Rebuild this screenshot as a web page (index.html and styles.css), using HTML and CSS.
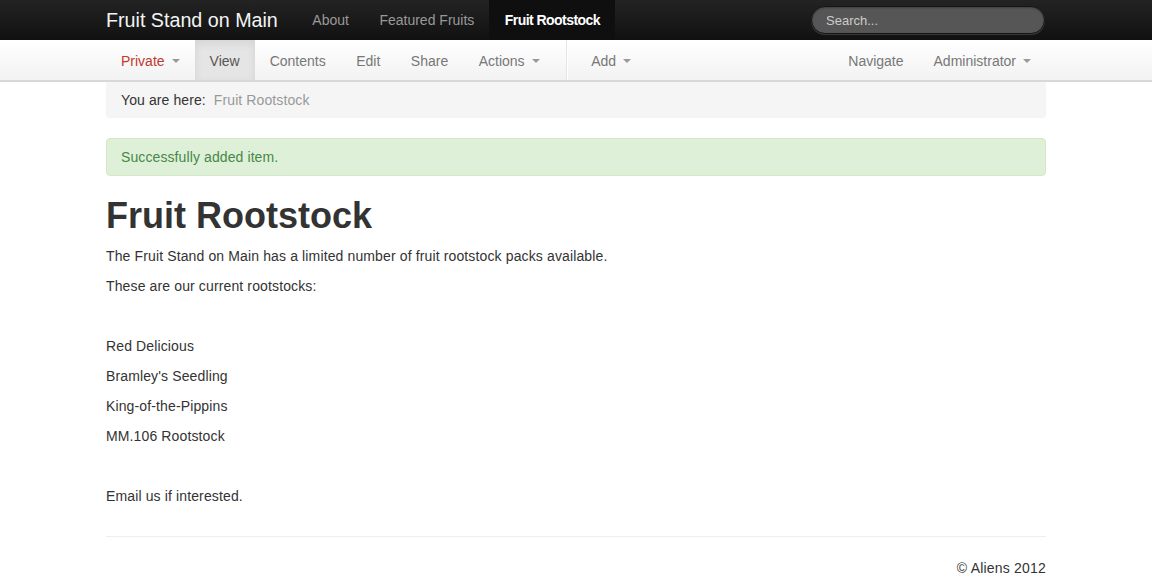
FILE: index.html
```html
<!DOCTYPE html>
<html>
<head>
<meta charset="utf-8">
<title>Fruit Rootstock</title>
<link rel="stylesheet" href="styles.css">
</head>
<body>
<div class="topbar">
  <div class="container topbar-inner">
    <a class="brand" href="#">Fruit Stand on Main</a>
    <ul class="topnav">
      <li><a href="#">About</a></li>
      <li><a href="#">Featured Fruits</a></li>
      <li class="active"><a href="#">Fruit Rootstock</a></li>
    </ul>
    <div class="search"><input type="text" placeholder="Search..."></div>
  </div>
</div>
<div class="toolbar">
  <div class="container toolbar-inner">
    <ul class="tools">
      <li class="state"><a href="#">Private<span class="caret"></span></a></li>
      <li class="active"><a href="#">View</a></li>
      <li><a href="#">Contents</a></li>
      <li><a href="#">Edit</a></li>
      <li><a href="#">Share</a></li>
      <li><a href="#">Actions<span class="caret"></span></a></li>
      <li class="divider"></li>
      <li><a href="#">Add<span class="caret"></span></a></li>
    </ul>
    <ul class="tools tools-right">
      <li><a href="#">Navigate</a></li>
      <li><a href="#">Administrator<span class="caret"></span></a></li>
    </ul>
  </div>
</div>
<div class="container main">
  <div class="breadcrumb">You are here:<span class="crumb">Fruit Rootstock</span></div>
  <div class="alert">Successfully added item.</div>
  <h1>Fruit Rootstock</h1>
  <div class="content">
    <p>The Fruit Stand on Main has a limited number of fruit rootstock packs available.</p>
    <p>These are our current rootstocks:</p>
    <p>&nbsp;</p>
    <p>Red Delicious</p>
    <p>Bramley's Seedling</p>
    <p>King-of-the-Pippins</p>
    <p>MM.106 Rootstock</p>
    <p>&nbsp;</p>
    <p>Email us if interested.</p>
  </div>
  <hr>
  <footer class="footer"><p>© Aliens 2012</p></footer>
</div>
</body>
</html>
```
FILE: styles.css
```css
* { box-sizing: border-box; }
html, body { margin: 0; padding: 0; }
body {
  font-family: "Liberation Sans", Arial, Helvetica, sans-serif;
  font-size: 14px;
  line-height: 20px;
  color: #333;
  background: #fff;
}
a { text-decoration: none; }
ul { list-style: none; margin: 0; padding: 0; }
.container { width: 940px; margin: 0 auto; }

.topbar {
  height: 40px;
  background: linear-gradient(#232323, #111);
}
.topbar-inner { display: flex; align-items: center; height: 40px; }
.brand {
  font-size: 19.7px;
  line-height: 20px;
  color: #f4f4f4;
  padding: 10px 19px 10px 0;
}
.topnav { display: flex; height: 40px; }
.topnav a {
  display: block;
  padding: 10px 15px 10px 15.5px;
  line-height: 20px;
  color: #999;
  font-size: 14px;
}
.topnav .active a {
  background: #0f0f0f;
  color: #fff;
  font-weight: bold;
  letter-spacing: -0.55px;
}
.search { margin-left: auto; padding-right: 1px; }
.search input {
  display: block;
  width: 234px;
  height: 28px;
  border: 1px solid #151515;
  border-radius: 14px;
  background: #565656;
  box-shadow: inset 0 1px 2px rgba(0,0,0,.3), 0 1px 0 rgba(255,255,255,.15);
  padding: 0 14px;
  font-family: inherit;
  font-size: 13px;
  color: #eee;
  outline: none;
}
.search input::placeholder { color: #ccc; }

.toolbar {
  height: 42px;
  background: linear-gradient(#fff, #f2f2f2);
  border-bottom: 2px solid #d8d8d8;
}
.toolbar-inner { display: flex; height: 40px; }
.tools { display: flex; height: 40px; }
.tools-right { margin-left: auto; }
.tools a {
  display: flex;
  align-items: center;
  height: 40px;
  padding: 2px 15px 0;
  color: #777;
  font-size: 14px;
}
.tools li:nth-child(n+4) a { padding-left: 15.5px; }
.tools .state a { color: #c0392f; }
.tools .active a {
  background: #e5e5e5;
  color: #555;
  box-shadow: inset 0 3px 8px rgba(0,0,0,.08);
}
.tools .divider {
  width: 2px;
  height: 40px;
  margin: 0 8px 0 11px;
  border-left: 1px solid #e5e5e5;
  border-right: 1px solid #fff;
}
.tools-right li a { padding-left: 15px; }
.caret {
  display: inline-block;
  width: 0;
  height: 0;
  margin-left: 7px;
  border-top: 4px solid #999;
  border-left: 4px solid transparent;
  border-right: 4px solid transparent;
}

.breadcrumb {
  background: #f5f5f5;
  border-radius: 0 0 4px 4px;
  padding: 8px 15px;
  margin: 0 0 20px;
  color: #333;
  letter-spacing: 0.1px;
}
.crumb { color: #999; margin-left: 8px; }
.alert {
  background: #dff0d8;
  border: 1px solid #d6e9c6;
  border-radius: 4px;
  color: #468847;
  padding: 8px 35px 8px 14px;
  margin: 0 0 20px;
  letter-spacing: 0.1px;
}
h1 {
  font-size: 36px;
  line-height: 40px;
  font-weight: bold;
  color: #333;
  margin: 10px 0;
}
.content { letter-spacing: 0.13px; }
p { margin: 0 0 10px; }
hr {
  margin: 30px 0 20px;
  border: 0;
  border-top: 1px solid #eee;
  border-bottom: 1px solid #fff;
}
.footer { text-align: right; letter-spacing: 0.2px; }
```
